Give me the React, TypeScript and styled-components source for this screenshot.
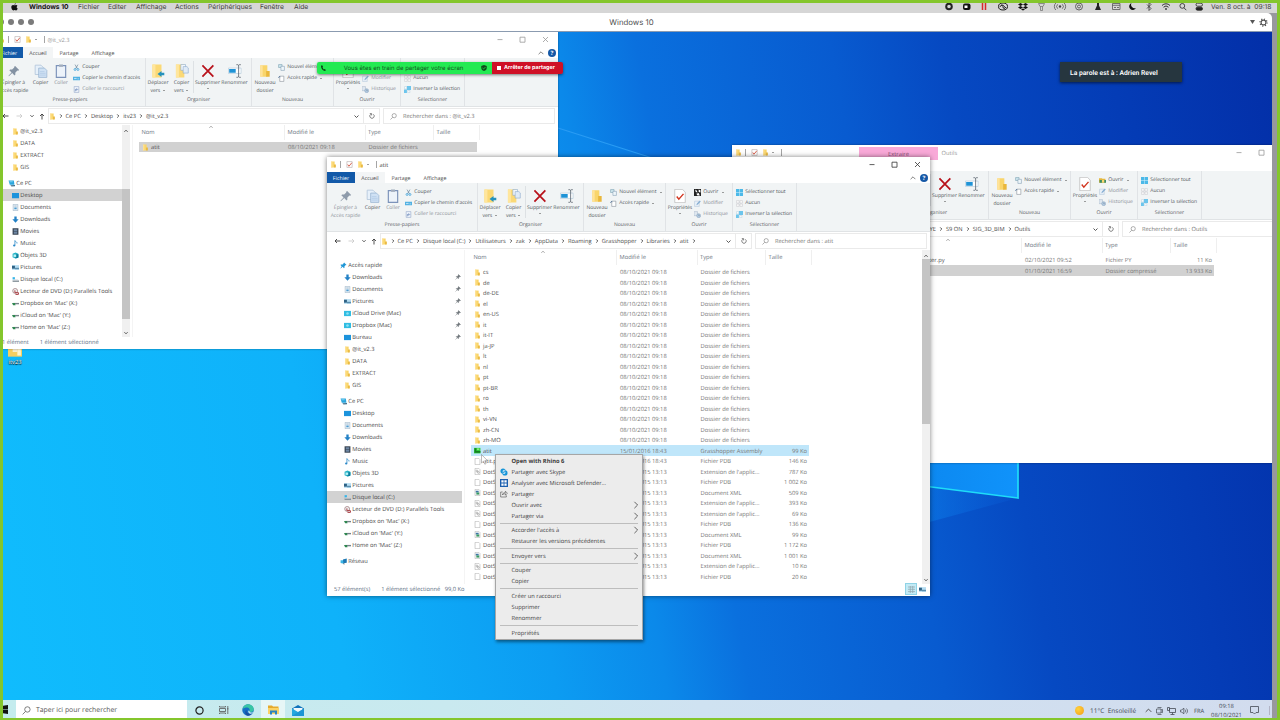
import React from 'react';
import styled, { createGlobalStyle } from 'styled-components';

const GlobalStyle = createGlobalStyle`
  * {
    box-sizing: border-box;
  }
  body {
    margin: 0;
    overflow: hidden;
    font-family: 'Open Sans', 'Noto Sans', sans-serif;
    font-size: 5.75px;
    color: #4a4a4a;
    text-rendering: geometricPrecision;
    white-space: nowrap;
  }
  svg {
    display: block;
    flex-shrink: 0;
  }
`;

/* ---------- icons ---------- */

type IconName =
  | 'folder' | 'zipfolder' | 'check' | 'pin' | 'copy' | 'paste' | 'scissors' | 'path' | 'shortcut'
  | 'move' | 'copyto' | 'delete' | 'rename' | 'newitem' | 'quick' | 'props' | 'open' | 'rhino' | 'edit'
  | 'history' | 'selall' | 'selnone' | 'selinv' | 'pc' | 'desktop' | 'doc' | 'down' | 'movies' | 'music'
  | 'cube' | 'pictures' | 'drive' | 'dvd' | 'netdrive' | 'cloud' | 'star' | 'network' | 'file' | 'dll'
  | 'xml' | 'gha' | 'search' | 'skype' | 'defender' | 'share' | 'refresh' | 'smallpin';

const shapes: Record<IconName, React.ReactNode> = {
  folder: (
    <>
      <path d="M2 1h6v10H2z" fill="#f9d56b" />
      <path d="M7 6h3v5H7z" fill="#e9b73c" />
      <path d="M2 1h2v10H2z" fill="#ffe39a" />
    </>
  ),
  zipfolder: (
    <>
      <path d="M0 0h12v10H0z" fill="#f6cf62" />
      <path d="M4 0h4v6H4z" fill="#f7edd0" />
      <path d="M8 1h3v8H8z" fill="#fff5d0" />
    </>
  ),
  check: (
    <>
      <path d="M1.5 1h9v10h-9z" fill="#fff" stroke="#b4a8a8" strokeWidth="1" />
      <path d="M3 6l2 3 5-6" fill="none" stroke="#d4503c" strokeWidth="1.5" />
    </>
  ),
  pin: (
    <path
      d="M7 1.8l3.4 3.4-.8.6-.7-.2-1.8 1.8.1 1.7-.8.7-1.9-2L1.6 10.4l-.3-.3 2.6-2.8L2 5.4l.7-.7 1.7.1 1.8-1.8-.1-.6z"
      fill="#8492a3"
    />
  ),
  copy: (
    <>
      <path d="M1 1h5l2 2v6H1z" fill="#e6f0fa" stroke="#a9bfd6" strokeWidth=".6" />
      <path d="M4 3.5h5l2 2V11.5H4z" fill="#cfe1f4" stroke="#94b0cf" strokeWidth=".6" />
      <path d="M5 6.5h4M5 8h5M5 9.5h5" stroke="#a8c5e4" strokeWidth=".5" />
    </>
  ),
  paste: (
    <>
      <path d="M2 1.4h8v10H2z" fill="#edf3fb" stroke="#7089b4" strokeWidth="1" />
      <path d="M4.3.4h3.4v2H4.3z" fill="#9aa6b8" />
    </>
  ),
  scissors: (
    <>
      <path d="M3.5 1l4 7M8.5 1l-4 7" stroke="#57748c" strokeWidth="1" />
      <circle cx="3.5" cy="9.4" r="1.7" fill="none" stroke="#2d9bd8" strokeWidth="1.2" />
      <circle cx="8.5" cy="9.4" r="1.7" fill="none" stroke="#2d9bd8" strokeWidth="1.2" />
    </>
  ),
  path: (
    <>
      <path d="M0 3h12v6H0z" fill="#4fb0e2" />
      <path d="M2 5l1 2 1-2 1 2 1-2M7.5 6.6h3" stroke="#fff" strokeWidth=".8" fill="none" />
    </>
  ),
  shortcut: (
    <>
      <path d="M2 1h8v10H2z" fill="#eef3fa" stroke="#8aa0c4" strokeWidth=".9" />
      <path d="M4 9V6h3M6 4l2 2-2 2" fill="none" stroke="#4d6fa8" strokeWidth="1" />
    </>
  ),
  move: (
    <>
      <path d="M1.2.5H9v11H1.2z" fill="#fbd976" />
      <path d="M1.2.5h2.6v11H1.2z" fill="#ffe69d" />
      <path d="M11.4 7.6v2H9v1.6L5.6 8.6 9 6v1.6z" fill="#2592bd" />
    </>
  ),
  copyto: (
    <>
      <path d="M.8.5H8v11H.8z" fill="#fbd976" />
      <path d="M.8.5h2.6v11H.8z" fill="#ffe69d" />
      <path d="M5 .4h4v5H5z" fill="#f2f7fc" stroke="#8aa8cc" strokeWidth=".5" />
      <path d="M7 2.2h3.2l1.2 1.2v4.4H7z" fill="#dfebf8" stroke="#8aa8cc" strokeWidth=".5" />
    </>
  ),
  delete: <path d="M1.2 1.2l9.4 9.6M10.6 1.2L1.2 10.8" stroke="#b8121b" strokeWidth="1.5" />,
  rename: (
    <>
      <path d="M.4 3.5h10.8v4.6H.4z" fill="#fff" stroke="#a9c3d8" strokeWidth=".5" />
      <path d="M1 4.2h5.6v3.2H1z" fill="#1f93d6" />
      <path d="M7.2.6h1.3l.6.5.6-.5H11M9.1 1v10M7.2 11.4h1.3l.6-.5.6.5H11" fill="none" stroke="#5c6670" strokeWidth=".7" />
    </>
  ),
  newitem: (
    <>
      <path d="M1 1h6v5H1z" fill="#cfe6ee" stroke="#6e98a8" strokeWidth=".9" />
      <path d="M5 4h6v7H5z" fill="#eef6fa" stroke="#7b98ae" strokeWidth=".9" />
    </>
  ),
  quick: (
    <>
      <path d="M3 2h7v9H3z" fill="#fff" stroke="#858d96" strokeWidth="1" />
      <path d="M0 5l3-3v2" fill="none" stroke="#4c6f96" strokeWidth="1.2" />
    </>
  ),
  props: (
    <>
      <path d="M1.5.3h6.6l2.4 2.4v9H1.5z" fill="#fff" stroke="#b6b6b6" strokeWidth=".6" />
      <path d="M3.2 6.4l1.8 2.3 4-4.5" fill="none" stroke="#d1351f" strokeWidth="1.2" />
    </>
  ),
  open: (
    <>
      <path d="M0 2h5l1 1h5v7H0z" fill="#e4b83e" />
      <path d="M1 5h11v5H1z" fill="#3d8c66" />
      <path d="M5 5h4v5H5z" fill="#f8d770" />
    </>
  ),
  rhino: (
    <>
      <path d="M0 0h12v12H0z" fill="#222" />
      <path d="M2 1l3 2 1 3-3-1zM8 1l3 1v4L8 5zM4 8l4-1 2 4H6z" fill="#fff" />
    </>
  ),
  edit: (
    <>
      <path d="M1 2h8v9H1z" fill="#eaf1f8" stroke="#a6bdd4" strokeWidth=".8" />
      <path d="M4 9l1-3 5-5 1.6 1.6-5 5z" fill="#86aed2" />
    </>
  ),
  history: (
    <>
      <path d="M0 1h6v7H0z" fill="#dfe8f0" stroke="#9fb1c6" strokeWidth=".8" />
      <circle cx="8" cy="8" r="3.4" fill="#b4cce2" stroke="#8099b8" strokeWidth=".8" />
      <path d="M8 6v2h2" fill="none" stroke="#64748a" strokeWidth=".7" />
    </>
  ),
  selall: (
    <>
      <path d="M0 0h12v12H0z" fill="#4cb9e8" />
      <path d="M6 0v12M0 6h12" stroke="#d7f1fc" strokeWidth=".9" />
    </>
  ),
  selnone: (
    <path d="M1 1h4.4v4.4H1zM6.8 1H11v4.4H6.8zM1 6.8h4.4V11H1zM6.8 6.8H11V11H6.8z" fill="#fafafa" stroke="#b9b9c0" strokeWidth=".7" />
  ),
  selinv: (
    <>
      <path d="M5 0h7v7H5zM0 6h5v6H0z" fill="#6cc5ec" />
      <path d="M1 1h3.6v4H1zM6.5 7.5H10v4H6.5z" fill="#fff" stroke="#8dbad4" strokeWidth=".6" />
    </>
  ),
  pc: (
    <>
      <path d="M1 1h9l1 7H3z" fill="#2aa5dc" />
      <path d="M4 9l8-.5v2L6 11z" fill="#3f6f8c" />
      <path d="M2 2h6v2H3z" fill="#79d2f4" />
    </>
  ),
  desktop: <path d="M0 1.5h12v9H0z" fill="#1c93dc" />,
  doc: (
    <>
      <path d="M2 .6h8v10.8H2z" fill="#e8f1f8" stroke="#90a9bd" strokeWidth=".9" />
      <path d="M4 6h4v3H4z" fill="#4f9cd0" />
      <path d="M4 3.5h4" stroke="#7f9cb4" />
    </>
  ),
  down: <path d="M4 1h4v4.5h3.4L6 11.4.6 5.5H4z" fill="#2381c6" />,
  movies: (
    <>
      <path d="M1 .5h10v11H1z" fill="#35414f" />
      <path d="M3 2h6v3.4H3zM3 6.6h6V10H3z" fill="#6d86a4" />
    </>
  ),
  music: (
    <>
      <path d="M5 1v8M5 1c1 2.4 4 2 3.6 5" stroke="#2787c8" strokeWidth="1.3" fill="none" />
      <ellipse cx="3.8" cy="9.4" rx="2" ry="1.6" fill="#2787c8" />
    </>
  ),
  cube: (
    <>
      <path d="M1 3l5-2 5 2v6l-5 2-5-2z" fill="#26b3c7" />
      <path d="M6 4h5v6L6 11z" fill="#0b7f9e" />
      <path d="M2.6 4.4h4.6v4H2.6z" fill="#b9f3f6" />
    </>
  ),
  pictures: (
    <>
      <path d="M0 2h12v8H0z" fill="#b4dcf2" />
      <path d="M0 3h5v5H0z" fill="#2f6284" />
      <path d="M5 6.500h7V9H5z" fill="#5b8fb0" />
    </>
  ),
  drive: (
    <>
      <path d="M1 7.600h11v2.400H1z" fill="#7a8790" />
      <path d="M1 2h4v4H1z" fill="#36b4e8" />
      <path d="M1 7.600h11l-2-1.400H3z" fill="#c9d2d8" />
    </>
  ),
  dvd: (
    <>
      <circle cx="5.4" cy="5" r="4.2" fill="#f1f1f1" stroke="#8d6468" strokeWidth="1.1" />
      <path d="M5 4v4h6v3H6" fill="none" stroke="#a5343a" strokeWidth="1.6" />
    </>
  ),
  netdrive: (
    <>
      <path d="M2 5h10v2.400H2z" fill="#76828a" />
      <path d="M0 5h5l1 4.200H2z" fill="#2f8750" />
    </>
  ),
  cloud: (
    <>
      <path d="M0 1.5h12v9H0z" fill="#31bde2" />
      <circle cx="6" cy="6" r="2.2" fill="#8fe0f2" />
    </>
  ),
  star: <path d="M7 .8l4.2 4.2-2 .6-1.6 2 .1 2.1-.9.8-2.3-2.4L1.2 11l-.4-.3 2-3.3L.8 5l.8-.8 3 .1 1.6-2z" fill="#2197d6" />,
  network: (
    <>
      <path d="M1 4h6v6l-6-1.4z" fill="#3bb5e6" />
      <path d="M5 2.4L11.6 1v7L6 9z" fill="#1d78b4" />
      <path d="M5 9l3 1-1 1.6z" fill="#555" />
    </>
  ),
  file: <path d="M1.8.6h6.4l2 2v8.8H1.8z" fill="#fff" stroke="#a3a3a3" strokeWidth=".9" />,
  dll: (
    <>
      <path d="M1.8.6h6.4l2 2v8.8H1.8z" fill="#fff" stroke="#a3a3a3" strokeWidth=".9" />
      <circle cx="5" cy="5" r="1.5" fill="none" stroke="#858585" strokeWidth=".9" />
      <circle cx="7.4" cy="7.6" r="1.5" fill="none" stroke="#858585" strokeWidth=".9" />
    </>
  ),
  xml: (
    <>
      <path d="M1.8.6h6.4l2 2v8.8H1.8z" fill="#fff" stroke="#a3a3a3" strokeWidth=".9" />
      <path d="M3 3h5v3H3z" fill="#3d75a5" />
      <path d="M4 6h5v3.6H4z" fill="#3a9a62" />
    </>
  ),
  gha: (
    <>
      <path d="M0 1.5h11v9.4H0z" fill="#2fcf3d" />
      <path d="M1 2h3v5h7v3H1z" fill="#147f23" />
      <path d="M5 2.5h4v2.4H5z" fill="#9af08e" />
    </>
  ),
  search: (
    <>
      <circle cx="7.2" cy="4.6" r="3.6" fill="none" stroke="currentColor" strokeWidth="1" />
      <path d="M4.6 7.4L.8 11.2" stroke="currentColor" strokeWidth="1" />
    </>
  ),
  skype: (
    <>
      <circle cx="4.6" cy="4.6" r="3.9" fill="#1594d8" />
      <circle cx="7.4" cy="7.4" r="3.9" fill="#1594d8" />
      <path d="M8 4.2C7 3.2 4.2 3.3 4.3 4.8c.1 1.4 3.6.9 3.6 2.4 0 1.4-2.800 1.500-3.900.3" fill="none" stroke="#fff" strokeWidth="1.1" />
    </>
  ),
  defender: (
    <>
      <path d="M0 0h12v12H0z" fill="#1c5fae" />
      <path d="M2 2h3.4v3.4H2zM6.6 2H10v3.4H6.6zM2 6.6h3.4V10H2zM6.6 6.6H10V10H6.6z" fill="#fff" />
    </>
  ),
  share: (
    <path d="M4 3H1v7.5h8.5V8M3.5 7.5c.4-2.6 2-3.6 4.6-3.6V1.800l3 3-3 3V5.600c-2 0-3.400.4-4.600 1.900z" fill="none" stroke="#4a4a4a" strokeWidth=".9" />
  ),
  refresh: (
    <>
      <path d="M3.4 2.6A4.400 4.400 0 1 0 8.600 2.600" fill="none" stroke="#444" strokeWidth="1.300" />
      <path d="M1.600 1.200h3.600v3.600" fill="none" stroke="#444" strokeWidth="1.300" />
    </>
  ),
  smallpin: (
    <path d="M7 1l4 4-2 .6-2 2-.2 2L2.4 5.2l2-.2 2-2zM4 8l-3 3" fill="#6e7479" stroke="#6e7479" strokeWidth=".9" />
  ),
};

interface IconProps {
  name: IconName;
  size?: number;
}

function Icon({ name, size = 7 }: IconProps) {
  return (
    <svg width={size} height={size} viewBox="0 0 12 12">
      {shapes[name]}
    </svg>
  );
}

interface ChevronProps {
  dir: 'up' | 'down' | 'right';
  size?: number;
  color?: string;
}

const chevrons = { up: 'M1 7l4-4 4 4', down: 'M1 3l4 4 4-4', right: 'M3 1l4 4-4 4' };

function Chevron({ dir, size = 4, color = '#444' }: ChevronProps) {
  return (
    <svg width={size} height={size} viewBox="0 0 10 10">
      <path d={chevrons[dir]} fill="none" stroke={color} strokeWidth={9 / size} />
    </svg>
  );
}

/* ---------- screen ---------- */

const Screen = styled.div`
  position: relative;
  width: 1280px;
  height: 720px;
  overflow: hidden;
  display: flex;
  flex-direction: column;
  background: #98989d;
  border: solid #84c62c;
  border-width: 3px 3px 2px 3px;
`;

const MenuBar = styled.div`
  height: 10px;
  display: flex;
  align-items: center;
  justify-content: space-between;
  background: #d6d6d6;
  padding: 0 5px 3px 8px;
  font-family: Inter, sans-serif;
  font-size: 6.7px;
  color: #3c3c3c;
`;

const MenuItems = styled.div`
  display: grid;
  grid-template-columns: 18px 49px 30px 28px 39px 33px 52px 34px 20px;
  align-items: center;
`;

const MenuItem = styled.span<{ $bold?: boolean }>`
  font-weight: ${(p) => (p.$bold ? 700 : 400)};
  color: ${(p) => (p.$bold ? '#111' : 'inherit')};
`;

const TrayIcons = styled.div`
  display: flex;
  align-items: center;
`;

const MacClock = styled.span`
  width: 61px;
  font-size: 6.7px;
  margin-left: 8px;
`;

const VmWindow = styled.div`
  width: 1269px;
  flex: 1;
  display: flex;
  flex-direction: column;
  border-radius: 0 5px 0 0;
  overflow: hidden;
  background: #fff;
`;

const VmTitle = styled.div`
  height: 19px;
  display: grid;
  grid-template-columns: 100px 1fr 100px;
  align-items: center;
  border-bottom: 1px solid #8b9bb0;
  font-family: Inter, sans-serif;
  font-size: 7.8px;
  color: #505050;
`;

const TrafficLights = styled.div`
  display: flex;
  gap: 4px;
  margin-left: -5px;
`;

const Light = styled.span`
  width: 6px;
  height: 6px;
  border-radius: 50%;
  background: #7b7b7b;
`;

const VmName = styled.div`
  text-align: center;
  padding-right: 12px;
`;

const VmActions = styled.div`
  display: flex;
  justify-content: flex-end;
  align-items: center;
  gap: 4px;
  padding-right: 4px;
`;

const Desktop = styled.div`
  position: relative;
  flex: 1;
  overflow: hidden;
  background: linear-gradient(
    80deg,
    #10bcfd 0%,
    #0fb2fa 25%,
    #0c9cf2 40%,
    #0b89ea 48%,
    #0a70de 54%,
    #085bd0 68%,
    #0649c2 76%,
    #043cb6 88%,
    #032fa8 100%
  );
`;

const Wallpaper = styled.svg`
  position: absolute;
  inset: 0;
`;

const ShortcutItem = styled.div`
  position: absolute;
  left: 2px;
  top: 313px;
  width: 20px;
  display: flex;
  flex-direction: column;
  align-items: center;
  color: #fff;
  line-height: 7px;
  text-shadow: 0 1px 1px #000, 0 0 1px #000;
`;

/* ---------- explorer window ---------- */

const Frame = styled.section<{ $x: number; $y: number; $w: number; $h: number; $dim?: boolean }>`
  position: absolute;
  left: ${(p) => p.$x}px;
  top: ${(p) => p.$y}px;
  width: ${(p) => p.$w}px;
  height: ${(p) => p.$h}px;
  display: flex;
  flex-direction: column;
  background: #fff;
  box-shadow: 0 0 ${(p) => (p.$dim ? 2 : 5)}px rgba(0, 0, 0, ${(p) => (p.$dim ? 0.4 : 0.5)});
`;

const TitleBar = styled.header<{ $dim?: boolean }>`
  height: 15px;
  flex-shrink: 0;
  display: flex;
  align-items: center;
  padding-left: 3px;
  color: ${(p) => (p.$dim ? '#9a9a9a' : '#444')};
`;

const QuickAccess = styled.div`
  display: grid;
  grid-template-columns: 10px 6px 11px 8.5px 10.5px 3px;
  align-items: center;
  justify-items: start;
`;

const Bar = styled.i`
  width: 1px;
  height: 7px;
  background: #a5a5a5;
`;

const TitleText = styled.span`
  margin-left: 0.5px;
`;

const ContextTab = styled.span`
  width: 79px;
  height: 13px;
  margin: 2px 3px 0 75px;
  background: #f9a9d8;
  color: #8a4d75;
  display: flex;
  align-items: center;
  justify-content: center;
`;

const Controls = styled.div`
  margin-left: auto;
  padding-right: 9px;
`;

const Tabs = styled.nav`
  height: 11px;
  flex-shrink: 0;
  display: flex;
  font-size: 5.3px;
`;

const Tab = styled.span<{ $w: number; $kind?: 'file' | 'active' }>`
  width: ${(p) => p.$w}px;
  display: flex;
  align-items: center;
  justify-content: center;
  background: ${(p) => (p.$kind === 'file' ? '#1259a8' : p.$kind === 'active' ? '#f3f5f6' : 'transparent')};
  color: ${(p) => (p.$kind === 'file' ? '#fff' : 'inherit')};
`;

const TabTools = styled.div`
  margin-left: auto;
  display: flex;
  align-items: center;
  gap: 4px;
  padding-right: 2px;
`;

const Help = styled.span`
  width: 8px;
  height: 8px;
  border-radius: 50%;
  background: #1558a6;
  color: #fff;
  font-weight: 700;
  font-size: 6px;
  line-height: 8px;
  text-align: center;
`;

const RibbonBar = styled.div`
  height: 49px;
  flex-shrink: 0;
  display: flex;
  background: #f1f4f5;
  border-bottom: 1px solid #e0e3e5;
  font-size: 5.05px;
`;

const Group = styled.div<{ $w: number }>`
  width: ${(p) => p.$w}px;
  display: flex;
  flex-direction: column;
  border-right: 1px solid #e0e3e6;
`;

const GroupBody = styled.div<{ $indent?: number }>`
  height: 38px;
  padding-left: ${(p) => p.$indent ?? 0}px;
  display: flex;
`;

const GroupLabel = styled.div`
  text-align: center;
  line-height: 11px;
  color: #5c6166;
`;

const BigButton = styled.div<{ $w: number; $off?: boolean }>`
  width: ${(p) => p.$w}px;
  flex-shrink: 0;
  padding-top: 5.5px;
  display: flex;
  flex-direction: column;
  align-items: center;
  line-height: 7.5px;
  color: ${(p) => (p.$off ? '#8c9198' : '#50555a')};
  svg {
    margin-bottom: 2.5px;
    opacity: ${(p) => (p.$off ? 0.9 : 1)};
  }
`;

const Caret = styled.i`
  display: inline-block;
  border: 1.3px solid transparent;
  border-top: 1.6px solid #444;
  border-bottom: 0;
  margin: 0 1px;
  vertical-align: middle;
`;

const SmallList = styled.div`
  padding-top: 3.5px;
  flex-shrink: 0;
  display: flex;
  flex-direction: column;
`;

const SmallButton = styled.div<{ $off?: boolean }>`
  height: 11px;
  display: flex;
  align-items: center;
  gap: 2.3px;
  color: ${(p) => (p.$off ? '#8c9198' : '#50555a')};
`;

const Divider = styled.i`
  width: 1px;
  height: 32px;
  margin-top: 3px;
  background: #dde1e4;
`;

const AddressRow = styled.div`
  height: 17.5px;
  flex-shrink: 0;
  display: flex;
  align-items: center;
  padding: 1px 3px 0.5px 7px;
`;

const NavArrows = styled.div`
  width: 45.5px;
  display: grid;
  grid-template-columns: 14px 13.5px 9px 9px;
  align-items: center;
`;

const AddressBox = styled.div`
  flex: 1;
  height: 15.5px;
  min-width: 0;
  display: flex;
  align-items: center;
  border: 1px solid #eaeaea;
`;

const Crumbs = styled.div<{ $indent: number }>`
  display: flex;
  align-items: center;
  gap: 3px;
  margin-left: ${(p) => p.$indent}px;
  flex: 1;
`;

const Refresh = styled.div`
  width: 16px;
  height: 14px;
  margin-left: 4px;
  border-left: 1px solid #eaeaea;
  display: flex;
  align-items: center;
  justify-content: center;
`;

const SearchBox = styled.div`
  width: 172px;
  height: 15.5px;
  margin-left: 3px;
  padding-left: 6px;
  display: flex;
  align-items: center;
  gap: 6px;
  border: 1px solid #eaeaea;
  color: #777;
`;

const Body = styled.div`
  flex: 1;
  min-height: 0;
  display: flex;
`;

const NavPane = styled.aside<{ $top: number }>`
  width: 135px;
  flex-shrink: 0;
  display: flex;
  overflow: hidden;
  > div:first-child {
    flex: 1;
    padding-top: ${(p) => p.$top}px;
  }
`;

const NavItem = styled.div<{ $root?: boolean; $selected?: boolean; $gap?: boolean }>`
  height: 12px;
  margin-top: ${(p) => (p.$gap ? 4 : 0)}px;
  padding-left: ${(p) => (p.$root ? 12.5 : 16.5)}px;
  padding-right: 1px;
  display: flex;
  align-items: center;
  gap: 1.8px;
  background: ${(p) => (p.$selected ? '#d2d2d2' : 'transparent')};
  > svg:nth-of-type(2) {
    margin-left: auto;
  }
`;

const ScrollTrack = styled.div<{ $top: number; $thumb: number }>`
  width: 8px;
  flex-shrink: 0;
  display: flex;
  flex-direction: column;
  align-items: center;
  background: #f0f0f0;
  padding: 4px 0 2px;
  > i {
    width: 8px;
    height: ${(p) => p.$thumb}px;
    margin-top: ${(p) => p.$top}px;
    margin-bottom: auto;
    background: #c4c4c4;
  }
`;

const FileList = styled.main`
  flex: 1;
  margin-left: 2px;
  padding-left: 6px;
  border-left: 1px solid #f4f4f4;
  overflow: hidden;
`;

const ListHeader = styled.div`
  position: relative;
  width: 340.5px;
  height: 15px;
  margin-bottom: 2.3px;
  display: grid;
  grid-template-columns: 146px 80.5px 68.5px 45.5px;
  color: #6a7480;
  > span {
    display: flex;
    align-items: center;
    padding-left: 2.5px;
    border-right: 1px solid #efefef;
  }
  > svg {
    position: absolute;
    left: 70px;
    top: 0;
  }
`;

const Row = styled.div<{ $state?: 'active' | 'inactive' }>`
  width: 338px;
  height: 10.51px;
  display: grid;
  grid-template-columns: 146px 80.5px 68.5px 43px;
  align-items: center;
  color: #777;
  background: ${(p) => (p.$state === 'active' ? '#bfe6fa' : p.$state === 'inactive' ? '#d1d1d1' : 'transparent')};
`;

const NameCell = styled.span`
  display: flex;
  align-items: center;
  gap: 2.5px;
  padding-left: 2.5px;
  color: #505050;
`;

const Cell = styled.span<{ $right?: boolean }>`
  padding: 0 2px 0 3px;
  text-align: ${(p) => (p.$right ? 'right' : 'left')};
`;

const StatusBar = styled.footer`
  height: 12.5px;
  flex-shrink: 0;
  display: flex;
  align-items: center;
  gap: 11px;
  padding: 0 0 1.5px 7px;
  color: #5d6f84;
`;

const Views = styled.div`
  margin-left: auto;
  display: flex;
  align-items: center;
  gap: 1px;
  padding-right: 4px;
`;

const ViewButton = styled.span<{ $on?: boolean }>`
  width: ${(p) => (p.$on ? 12 : 8)}px;
  height: 12px;
  display: flex;
  align-items: center;
  justify-content: center;
  background: ${(p) => (p.$on ? '#c3eaf5' : 'transparent')};
  border: ${(p) => (p.$on ? '1px solid #8fd3e6' : '0')};
`;

interface NavEntry {
  icon: IconName;
  label: string;
  root?: boolean;
  pinned?: boolean;
  gap?: boolean;
}

interface FileEntry {
  icon?: IconName;
  name: string;
  date: string;
  type: string;
  size?: string;
}

const folderShortcuts: NavEntry[] = ['@it_v2.3', 'DATA', 'EXTRACT', 'GIS'].map((label) => ({ icon: 'folder', label }));

const computer: NavEntry[] = [
  { icon: 'pc', label: 'Ce PC', root: true, gap: true },
  { icon: 'desktop', label: 'Desktop' },
  { icon: 'doc', label: 'Documents' },
  { icon: 'down', label: 'Downloads' },
  { icon: 'movies', label: 'Movies' },
  { icon: 'music', label: 'Music' },
  { icon: 'cube', label: 'Objets 3D' },
  { icon: 'pictures', label: 'Pictures' },
  { icon: 'drive', label: 'Disque local (C:)' },
  { icon: 'dvd', label: 'Lecteur de DVD (D:) Parallels Tools' },
  { icon: 'netdrive', label: "Dropbox on 'Mac' (X:)" },
  { icon: 'netdrive', label: "iCloud on 'Mac' (Y:)" },
  { icon: 'netdrive', label: "Home on 'Mac' (Z:)" },
];

const fullNav: NavEntry[] = [
  { icon: 'star', label: 'Accès rapide', root: true },
  { icon: 'down', label: 'Downloads', pinned: true },
  { icon: 'doc', label: 'Documents', pinned: true },
  { icon: 'pictures', label: 'Pictures', pinned: true },
  { icon: 'cloud', label: 'iCloud Drive (Mac)', pinned: true },
  { icon: 'cloud', label: 'Dropbox (Mac)', pinned: true },
  { icon: 'desktop', label: 'Bureau', pinned: true },
  ...folderShortcuts,
  ...computer,
  { icon: 'network', label: 'Réseau', root: true, gap: true },
];

const cultures = [
  'cs', 'de', 'de-DE', 'el', 'en-US', 'it', 'it-IT', 'ja-JP', 'lt', 'nl', 'pt', 'pt-BR', 'ro', 'th', 'vi-VN', 'zh-CN', 'zh-MO',
];

const dll = "Extension de l'applic...";
const spatial: [IconName, string, string][] = [
  ['dll', dll, '787 Ko'],
  ['file', 'Fichier PDB', '1 002 Ko'],
  ['xml', 'Document XML', '509 Ko'],
  ['dll', dll, '393 Ko'],
  ['dll', dll, '69 Ko'],
  ['file', 'Fichier PDB', '136 Ko'],
  ['xml', 'Document XML', '99 Ko'],
  ['file', 'Fichier PDB', '1 172 Ko'],
  ['xml', 'Document XML', '1 001 Ko'],
  ['dll', dll, '10 Ko'],
  ['file', 'Fichier PDB', '20 Ko'],
];

const atitFiles: FileEntry[] = [
  ...cultures.map((name): FileEntry => ({ icon: 'folder', name, date: '08/10/2021 09:18', type: 'Dossier de fichiers' })),
  { icon: 'gha', name: 'atit', date: '15/01/2016 18:43', type: 'Grasshopper Assembly', size: '99 Ko' },
  { icon: 'file', name: 'atit.pdb', date: '15/01/2016 18:43', type: 'Fichier PDB', size: '146 Ko' },
  ...spatial.map(([icon, type, size]): FileEntry => ({ icon, name: 'DotSpatial', date: '27/03/2015 13:13', type, size })),
];

interface RibbonProps {
  pinOff?: boolean;
  openIcon: IconName;
}

function Ribbon({ pinOff, openIcon }: RibbonProps) {
  return (
    <RibbonBar>
      <Group $w={151}>
        <GroupBody>
          <BigButton $w={37} $off={pinOff}>
            <Icon name="pin" size={14} />
            <span>Épingler à</span>
            <span>Accès rapide</span>
          </BigButton>
          <BigButton $w={17}>
            <Icon name="copy" size={14} />
            <span>Copier</span>
          </BigButton>
          <BigButton $w={24} $off>
            <Icon name="paste" size={14} />
            <span>Coller</span>
          </BigButton>
          <SmallList>
            <SmallButton><Icon name="scissors" />Couper</SmallButton>
            <SmallButton><Icon name="path" />Copier le chemin d'accès</SmallButton>
            <SmallButton $off><Icon name="shortcut" />Coller le raccourci</SmallButton>
          </SmallList>
        </GroupBody>
        <GroupLabel>Presse-papiers</GroupLabel>
      </Group>
      <Group $w={106}>
        <GroupBody>
          <BigButton $w={24}>
            <Icon name="move" size={14} />
            <span>Déplacer</span>
            <span>vers <Caret /></span>
          </BigButton>
          <BigButton $w={23}>
            <Icon name="copyto" size={14} />
            <span>Copier</span>
            <span>vers <Caret /></span>
          </BigButton>
          <Divider />
          <BigButton $w={27}>
            <Icon name="delete" size={14} />
            <span>Supprimer</span>
            <Caret />
          </BigButton>
          <BigButton $w={27}>
            <Icon name="rename" size={14} />
            <span>Renommer</span>
          </BigButton>
        </GroupBody>
        <GroupLabel>Organiser</GroupLabel>
      </Group>
      <Group $w={82}>
        <GroupBody>
          <BigButton $w={26}>
            <Icon name="folder" size={14} />
            <span>Nouveau</span>
            <span>dossier</span>
          </BigButton>
          <SmallList>
            <SmallButton><Icon name="newitem" />Nouvel élément <Caret /></SmallButton>
            <SmallButton><Icon name="quick" />Accès rapide <Caret /></SmallButton>
          </SmallList>
        </GroupBody>
        <GroupLabel>Nouveau</GroupLabel>
      </Group>
      <Group $w={67}>
        <GroupBody>
          <BigButton $w={28}>
            <Icon name="props" size={14} />
            <span>Propriétés</span>
            <Caret />
          </BigButton>
          <SmallList>
            <SmallButton><Icon name={openIcon} />Ouvrir <Caret /></SmallButton>
            <SmallButton $off><Icon name="edit" />Modifier</SmallButton>
            <SmallButton $off><Icon name="history" />Historique</SmallButton>
          </SmallList>
        </GroupBody>
        <GroupLabel>Ouvrir</GroupLabel>
      </Group>
      <Group $w={64}>
        <GroupBody $indent={3}>
          <SmallList>
            <SmallButton><Icon name="selall" />Sélectionner tout</SmallButton>
            <SmallButton><Icon name="selnone" />Aucun</SmallButton>
            <SmallButton><Icon name="selinv" />Inverser la sélection</SmallButton>
          </SmallList>
        </GroupBody>
        <GroupLabel>Sélectionner</GroupLabel>
      </Group>
    </RibbonBar>
  );
}

interface ExplorerProps {
  x: number;
  y: number;
  width: number;
  height: number;
  title: string;
  crumbs: string[];
  nav: NavEntry[];
  navTop: number;
  navSelected?: string;
  navScroll?: boolean;
  files: FileEntry[];
  fileSelected: string;
  status: string[];
  active?: boolean;
  contextTab?: string;
  openIcon?: IconName;
  crumbIndent?: number;
}

function Explorer(props: ExplorerProps) {
  const { active, crumbs, nav, files, contextTab } = props;
  return (
    <Frame $x={props.x} $y={props.y} $w={props.width} $h={props.height} $dim={!active}>
      <TitleBar $dim={!active}>
        <QuickAccess>
          <Icon name="folder" />
          <Bar />
          <Icon name="check" />
          <Icon name="folder" />
          <Caret />
          <Bar />
        </QuickAccess>
        {contextTab && <ContextTab>{contextTab}</ContextTab>}
        <TitleText>{props.title}</TitleText>
        <Controls>
          <svg width="54" height="7" viewBox="0 0 54 7" fill="none" stroke={active ? '#333' : '#999'} strokeWidth=".8">
            <path d="M2.5 3.6h5M25 1.2h5v5h-5zM48 1l5 5M53 1l-5 5" />
          </svg>
        </Controls>
      </TitleBar>
      <Tabs>
        <Tab $w={28} $kind="file">Fichier</Tab>
        <Tab $w={30} $kind="active">Accueil</Tab>
        <Tab $w={32}>Partage</Tab>
        <Tab $w={36}>Affichage</Tab>
        <TabTools>
          <Chevron dir="up" size={6} color="#777" />
          <Help>?</Help>
        </TabTools>
      </Tabs>
      <Ribbon pinOff={active} openIcon={props.openIcon ?? 'open'} />
      <AddressRow>
        <NavArrows>
          <svg width="7" height="6" viewBox="0 0 14 12" fill="none" stroke="#333" strokeWidth="1.7">
            <path d="M13 6H2M6 2L2 6l4 4" />
          </svg>
          <svg width="7" height="6" viewBox="0 0 14 12" fill="none" stroke="#c4c4c4" strokeWidth="1.5">
            <path d="M1 6h11M8 2l4 4-4 4" />
          </svg>
          <Chevron dir="down" size={4} />
          <svg width="6" height="7" viewBox="0 0 12 14" fill="none" stroke="#333" strokeWidth="1.7">
            <path d="M6 13V2M2 6l4-4 4 4" />
          </svg>
        </NavArrows>
        <AddressBox>
          <Crumbs $indent={props.crumbIndent ?? 0}>
            <Icon name="folder" />
            {crumbs.map((crumb) => (
              <React.Fragment key={crumb}>
                <Chevron dir="right" />
                <span>{crumb}</span>
              </React.Fragment>
            ))}
            {active && <Chevron dir="right" />}
          </Crumbs>
          <Chevron dir="down" size={5} />
          <Refresh><Icon name="refresh" size={6} /></Refresh>
        </AddressBox>
        <SearchBox>
          <Icon name="search" />
          Rechercher dans : {props.title}
        </SearchBox>
      </AddressRow>
      <Body>
        <NavPane $top={props.navTop}>
          <div>
            {nav.map((item, i) => (
              <NavItem key={i} $root={item.root} $gap={item.gap} $selected={item.label === props.navSelected}>
                <Icon name={item.icon} />
                {item.label}
                {item.pinned && <Icon name="smallpin" size={6} />}
              </NavItem>
            ))}
          </div>
          {props.navScroll && (
            <ScrollTrack $top={56} $thumb={130}>
              <Chevron dir="up" />
              <i />
              <Chevron dir="down" />
            </ScrollTrack>
          )}
        </NavPane>
        <FileList>
          <ListHeader>
            <span>Nom</span>
            <span>Modifié le</span>
            <span>Type</span>
            <span>Taille</span>
            <Chevron dir="up" color="#999" />
          </ListHeader>
          {files.map((file, i) => (
            <Row key={i} $state={file.name === props.fileSelected ? (active ? 'active' : 'inactive') : undefined}>
              <NameCell>
                {file.icon && <Icon name={file.icon} />}
                {file.name}
              </NameCell>
              <Cell>{file.date}</Cell>
              <Cell>{file.type}</Cell>
              <Cell $right>{file.size}</Cell>
            </Row>
          ))}
        </FileList>
        {active && (
          <ScrollTrack $top={1} $thumb={165}>
            <Chevron dir="up" />
            <i />
            <Chevron dir="down" />
          </ScrollTrack>
        )}
      </Body>
      <StatusBar>
        {props.status.map((text) => (
          <span key={text}>{text}</span>
        ))}
        {active && (
          <Views>
            <ViewButton $on>
              <svg width="7" height="7" viewBox="0 0 7 7" stroke="#8fa5ae" strokeWidth=".7">
                <path d="M0 1h7M0 3.3h7M0 5.6h7M2.3 0v7M4.7 0v7" />
              </svg>
            </ViewButton>
            <ViewButton><Icon name="pictures" size={7} /></ViewButton>
          </Views>
        )}
      </StatusBar>
    </Frame>
  );
}

/* ---------- context menu ---------- */

const Menu = styled.div`
  position: absolute;
  left: 492px;
  top: 422px;
  width: 148px;
  height: 186px;
  padding-top: 0.4px;
  background: #ececec;
  border: 1px solid #a6a6a6;
  box-shadow: 1px 2px 3px rgba(0, 0, 0, 0.45);
  color: #3c3c3c;
`;

const MenuRow = styled.div<{ $bold?: boolean }>`
  height: 11px;
  display: grid;
  grid-template-columns: 12px 1fr 10px;
  align-items: center;
  padding-left: 3.5px;
  font-weight: ${(p) => (p.$bold ? 700 : 400)};
  > span {
    grid-column: 2;
  }
`;

const MenuLine = styled.hr`
  margin: 1.2px 4px 1.35px;
  border: 0;
  border-top: 1px solid #bdbdbd;
`;

interface MenuEntry {
  label: string;
  icon?: IconName;
  sub?: boolean;
  bold?: boolean;
}

const menuGroups: MenuEntry[][] = [
  [
    { label: 'Open with Rhino 6', bold: true },
    { label: 'Partager avec Skype', icon: 'skype' },
    { label: 'Analyser avec Microsoft Defender...', icon: 'defender' },
    { label: 'Partager', icon: 'share' },
    { label: 'Ouvrir avec', sub: true },
    { label: 'Partager via', sub: true },
  ],
  [{ label: "Accorder l'accès à", sub: true }, { label: 'Restaurer les versions précédentes' }],
  [{ label: 'Envoyer vers', sub: true }],
  [{ label: 'Couper' }, { label: 'Copier' }],
  [{ label: 'Créer un raccourci' }, { label: 'Supprimer' }, { label: 'Renommer' }],
  [{ label: 'Propriétés' }],
];

function ContextMenu() {
  return (
    <Menu>
      {menuGroups.map((group, i) => (
        <React.Fragment key={i}>
          {i > 0 && <MenuLine />}
          {group.map((entry) => (
            <MenuRow key={entry.label} $bold={entry.bold}>
              {entry.icon && <Icon name={entry.icon} size={8} />}
              <span>{entry.label}</span>
              {entry.sub && <Chevron dir="right" size={8} color="#555" />}
            </MenuRow>
          ))}
        </React.Fragment>
      ))}
    </Menu>
  );
}

const Cursor = styled.svg`
  position: absolute;
  left: 478px;
  top: 422px;
`;

/* ---------- overlays ---------- */

const ShareBanner = styled.div`
  position: absolute;
  left: 314px;
  top: 59px;
  width: 246px;
  height: 12px;
  display: grid;
  grid-template-columns: 175px 71px;
  border-radius: 2px;
  overflow: hidden;
  box-shadow: 0 1px 3px rgba(0, 0, 0, 0.5);
  font-family: Inter, sans-serif;
  font-size: 6px;
`;

const Sharing = styled.div`
  display: flex;
  align-items: center;
  justify-content: space-between;
  padding: 0 5px 0 4px;
  background: #23ea52;
  color: #14541f;
`;

const StopSharing = styled.div`
  display: flex;
  align-items: center;
  justify-content: center;
  gap: 3px;
  padding-right: 3px;
  background: #cf1026;
  color: #fff;
  font-weight: 700;
  font-size: 5.4px;
  i {
    width: 4px;
    height: 4px;
    background: #fff;
  }
`;

const Toast = styled.div`
  position: absolute;
  left: 1057px;
  top: 59px;
  width: 122px;
  height: 20px;
  padding: 1px 0 0 10px;
  display: flex;
  align-items: center;
  background: #26363f;
  color: #fff;
  font-family: Roboto, sans-serif;
  font-weight: 600;
  font-size: 6.75px;
  box-shadow: 0 1px 3px rgba(0, 0, 0, 0.6);
`;

/* ---------- taskbar ---------- */

const TaskBar = styled.div`
  height: 18px;
  display: flex;
  align-items: center;
  background: linear-gradient(90deg, #c4ecee 0%, #c9e9ef 35%, #cfe2f1 55%, #d2dcee 100%);
  font-size: 6.7px;
`;

const StartButton = styled.div`
  width: 13px;
`;

const TaskSearch = styled.div`
  width: 171px;
  height: 18px;
  display: flex;
  align-items: center;
  gap: 5px;
  padding: 2px 0 0 6px;
  background: #fff;
  color: #555;
  font-size: 6.9px;
`;

const TaskButton = styled.div<{ $on?: boolean }>`
  width: 24.6px;
  height: 18px;
  padding-top: 2px;
  display: flex;
  align-items: center;
  justify-content: center;
  background: ${(p) => (p.$on ? '#e6f6f6' : 'transparent')};
`;

const Tray = styled.div`
  margin-left: auto;
  padding-top: 3px;
  display: flex;
  align-items: center;
  color: #454b55;
`;

const Sun = styled.span`
  width: 9px;
  height: 9px;
  margin-right: 6px;
  border-radius: 50%;
  background: radial-gradient(circle at 35% 35%, #ffd23c, #f39c1c);
`;

const Weather = styled.span`
  width: 55px;
  font-size: 6.5px;
`;

const TrayGlyphs = styled.div`
  width: 49px;
  display: flex;
  align-items: center;
  justify-content: space-between;
  padding-right: 6px;
`;

const Lang = styled.span`
  width: 16px;
  font-size: 5.8px;
`;

const Clock = styled.div`
  width: 33px;
  text-align: center;
  font-size: 5.8px;
  line-height: 9px;
  margin-right: 7px;
`;

function App() {
  return (
    <>
      <GlobalStyle />
      <Screen>
        <MenuBar>
          <MenuItems>
            <svg width="7" height="8" viewBox="0 0 14 16" fill="#111">
              <path d="M7 4.6C8 4.6 9 3.9 10.3 4c1 0 2 .5 2.6 1.4-2.3 1.3-2 4.7.5 5.7-.6 1.7-1.9 3.7-3.2 3.7-1.1 0-1.5-.6-2.8-.6s-1.7.6-2.8.6C3 14.9.6 11.5.6 8.5c0-2.8 1.8-4.4 3.6-4.4 1.1 0 2 .6 2.8.6zM9.7.5c.1 1.5-1.2 3-2.7 3C6.8 2 8.3.6 9.7.5z" />
            </svg>
            <MenuItem $bold>Windows 10</MenuItem>
            {['Fichier', 'Editer', 'Affichage', 'Actions', 'Périphériques', 'Fenêtre', 'Aide'].map((label) => (
              <MenuItem key={label}>{label}</MenuItem>
            ))}
          </MenuItems>
          <TrayIcons>
            <svg width="260" height="9" viewBox="0 0 260 9" fill="none" stroke="#222">
              <circle cx="6" cy="4.5" r="2.8" strokeWidth="2" />
              <rect x="20" y="1.5" width="7.5" height="6.5" rx="2" fill="#111" stroke="none" />
              <path d="M21.5 3.5h3v2.5h-3z" fill="#fff" stroke="none" />
              <path d="M39.5 1v7M42.5 1v7" stroke="#d8272c" strokeWidth="1.5" />
              <ellipse cx="60" cy="4.5" rx="4.5" ry="3.5" strokeWidth="1" />
              <path d="M57 5c1-3 3-2 3 0s2 2 3 0M58 3.5c2-1 3 0 4 2" strokeWidth="1" />
              <path d="M75 2.5L77.5 1 80 2.5 77.5 4zM80 2.5L82.5 1 85 2.5 82.5 4zM75 5.5L77.5 4 80 5.5 77.5 7zM80 5.5L82.5 4 85 5.5 82.5 7zM78 7.5l2-1 2 1-2 1z" fill="#111" stroke="none" />
              <path d="M95.5 1.5h6l-1.5 3h-3zM97.5 4.5v4h2v-4" stroke="#777" strokeWidth=".8" />
              <circle cx="117" cy="4.5" r="1.2" fill="#444" stroke="none" />
              <path d="M114.7 2.3a3 3 0 0 0 0 4.4M119.3 2.3a3 3 0 0 1 0 4.4M112.8 1a5 5 0 0 0 0 7M121.2 1a5 5 0 0 1 0 7" stroke="#555" strokeWidth=".8" />
              <circle cx="136" cy="4.5" r="3.5" stroke="#555" strokeWidth=".9" />
              <circle cx="136" cy="4.5" r="1.5" stroke="#555" strokeWidth=".9" />
              <path d="M154 1h2v2.5l2 4.5h-6l2-4.5z" fill="#222" stroke="none" />
              <path d="M169.5 1.5h7.5v6h-7.5zM169.5 3.3h7.5M171 5.5h2M174 5.5h2" stroke="#555" strokeWidth=".8" />
              <path d="M188.5 1a3.6 3.6 0 1 0 4.5 5 3.6 3.6 0 0 1-4.5-5z" fill="#111" stroke="none" />
              <path d="M204 2.5l4 4-2 2v-8l2 2-4 4" stroke="#333" strokeWidth=".8" />
              <path d="M219 3.5a5.5 5.5 0 0 1 8 0M220.5 5.2a3.5 3.5 0 0 1 5 0" stroke="#333" strokeWidth="1" />
              <circle cx="223" cy="7" r=".9" fill="#333" stroke="none" />
              <circle cx="239.3" cy="3.9" r="2.4" strokeWidth=".8" />
              <path d="M241 5.8l2.3 2.4" strokeWidth=".8" />
              <rect x="253" y="1.2" width="6.5" height="3" rx="1.5" strokeWidth=".8" />
              <rect x="253" y="5.2" width="6.5" height="3" rx="1.5" fill="#222" strokeWidth=".8" />
            </svg>
            <MacClock>Ven. 8 oct. à&nbsp; 09:18</MacClock>
          </TrayIcons>
        </MenuBar>
        <VmWindow>
          <VmTitle>
            <TrafficLights>
              <Light />
              <Light />
              <Light />
              <Light />
            </TrafficLights>
            <VmName>Windows 10</VmName>
            <VmActions>
              <svg width="5" height="4" viewBox="0 0 5 4"><path d="M0 0h5L2.5 4z" fill="#555" /></svg>
              <svg width="9" height="9" viewBox="0 0 18 18" fill="none" stroke="#555">
                <circle cx="9" cy="9" r="4.8" strokeWidth="2.2" />
                <circle cx="9" cy="9" r="7" strokeWidth="2.6" strokeDasharray="2.2 3.3" />
              </svg>
            </VmActions>
          </VmTitle>
          <Desktop>
            <Wallpaper width="1269" height="668" viewBox="3 32 1269 668">
              <defs>
                <linearGradient id="pane" x1="0" x2="1">
                  <stop offset="0" stopColor="#0b86ee" />
                  <stop offset="1" stopColor="#1093fb" />
                </linearGradient>
                <linearGradient id="beam" x1="0" x2="1">
                  <stop offset="0" stopColor="#0d8cf2" stopOpacity=".6" />
                  <stop offset="1" stopColor="#0a5fdc" stopOpacity=".2" />
                </linearGradient>
              </defs>
              <path d="M558 128l110 35v40H558z" fill="#0c8cf0" opacity=".25" />
              <path d="M558 128l110 35" stroke="#2a9cf4" strokeWidth="1.2" />
              <path d="M900 480l118 18-118 32z" fill="url(#beam)" />
              <path d="M900 440h118v58l-118-15z" fill="url(#pane)" />
              <path d="M900 483l118 15V440" fill="none" stroke="#1fdcf8" strokeWidth="1.7" />
            </Wallpaper>
            <ShortcutItem>
              <Icon name="zipfolder" size={14} />
              itv23
            </ShortcutItem>
            <Explorer
              x={-8}
              y={0}
              width={563}
              height={317}
              title="@it_v2.3"
              crumbs={['Ce PC', 'Desktop', 'itv23', '@it_v2.3']}
              nav={[...folderShortcuts, ...computer]}
              navTop={0.5}
              navSelected="Desktop"
              navScroll
              files={[{ icon: 'folder', name: 'atit', date: '08/10/2021 09:18', type: 'Dossier de fichiers' }]}
              fileSelected="atit"
              status={['1 élément', '1 élément sélectionné']}
            />
            <Explorer
              x={729}
              y={113}
              width={565}
              height={318}
              title="Outils"
              contextTab="Extraire"
              crumbs={['YE', 'S9 ON', 'SIG_3D_BIM', 'Outils']}
              crumbIndent={127}
              nav={[]}
              navTop={0}
              files={[
                { icon: 'file', name: 'geojson-converter.py', date: '02/10/2021 09:52', type: 'Fichier PY', size: '11 Ko' },
                { name: '', date: '01/10/2021 16:59', type: 'Dossier compressé', size: '13 933 Ko' },
              ]}
              fileSelected=""
              status={[]}
            />
            <Explorer
              x={324}
              y={125}
              width={603}
              height={439}
              title="atit"
              crumbs={['Ce PC', 'Disque local (C:)', 'Utilisateurs', 'zak', 'AppData', 'Roaming', 'Grasshopper', 'Libraries', 'atit']}
              nav={fullNav}
              navTop={9.5}
              navSelected="Disque local (C:)"
              files={atitFiles}
              fileSelected="atit"
              status={['57 élément(s)', '1 élément sélectionné\u00a0\u00a0 99,0 Ko']}
              openIcon="rhino"
              active
            />
            <Cursor width="7" height="11" viewBox="0 0 7 11">
              <path d="M.5.5v8.5l2-1.8 1.3 3 1.3-.6-1.3-2.9h2.7z" fill="#fff" stroke="#777" strokeWidth=".5" />
            </Cursor>
            <ContextMenu />
          </Desktop>
          <TaskBar>
            <StartButton>
              <svg width="5" height="9" viewBox="0 0 5 9" fill="#111"><path d="M0 .8L5 0v4.2H0zM0 4.8h5V9l-5-.8z" /></svg>
            </StartButton>
            <TaskSearch>
              <Icon name="search" size={9} />
              Taper ici pour rechercher
            </TaskSearch>
            <TaskButton>
              <svg width="9" height="9" viewBox="0 0 9 9"><circle cx="4.5" cy="4.5" r="3.6" fill="none" stroke="#222" strokeWidth="1.2" /></svg>
            </TaskButton>
            <TaskButton>
              <svg width="10" height="8" viewBox="0 0 10 8" fill="none" stroke="#555" strokeWidth=".8">
                <path d="M.5 0v1h6V0M.5 2.5h6v3h-6zM.5 8V7h6v1M8.8 0v8M8.8 2v1.5" />
              </svg>
            </TaskButton>
            <TaskButton>
              <svg width="12" height="12" viewBox="0 0 24 24">
                <circle cx="12" cy="12" r="11.5" fill="#1670c4" />
                <path d="M1 10C3 3 8 .5 12 .5c7 0 11.5 5 11.5 10 0 4-3 5.5-6 5.500-2 0-3-1-2.500-2C17 9 12 6 8 7c-3 .6-5.500 2-7 3z" fill="#38c5a4" />
                <path d="M9 12c-1 5 4 9 11 7-2 3-5 4.500-8 4.500C6 23.500 5 14 9 12z" fill="#1b4fa0" />
                <path d="M15 14c0 3 4 4 8 2-1 3-5 4-8 3-3-1.500-3-4-2-6z" fill="#c6ecee" />
              </svg>
            </TaskButton>
            <TaskButton $on>
              <svg width="11" height="10" viewBox="0 0 22 20">
                <path d="M0 1h8l2 2h11v5H0z" fill="#e5a92c" />
                <path d="M0 6h22v12H0z" fill="#fbd265" />
                <path d="M4 11h14v8h-4v-4H8v4H4z" fill="#2b83c0" />
              </svg>
            </TaskButton>
            <TaskButton>
              <svg width="12" height="11" viewBox="0 0 24 22">
                <path d="M0 7l12-7 12 7v14H0z" fill="#1173bb" />
                <path d="M3 6h18v8H3z" fill="#eef7fc" />
                <path d="M0 7l12 7 12-7v15H0z" fill="#22a7e0" />
                <path d="M24 7v15H0z" fill="#1484c8" opacity=".5" />
              </svg>
            </TaskButton>
            <Tray>
              <Sun />
              <Weather>11°C&nbsp; Ensoleillé</Weather>
              <TrayGlyphs>
                <Chevron dir="up" size={7} />
                <svg width="7" height="8" viewBox="0 0 7 8" fill="none" stroke="#454b55" strokeWidth=".7">
                  <path d="M1.5.5h4M1.5 7.5h4M.5 2h4.5v4H.5zM5 3l1.5-.6v3.2L5 5" />
                </svg>
                <svg width="9" height="8" viewBox="0 0 9 8" fill="none" stroke="#454b55" strokeWidth=".8">
                  <path d="M2.5 1.5h6v4h-6zM5.5 5.5v2M3.5 7.5h4M.5.5h2v3h-2z" />
                </svg>
                <svg width="8" height="8" viewBox="0 0 8 8" fill="none" stroke="#454b55" strokeWidth=".7">
                  <path d="M.5 3h1.3l2-2v6l-2-2H.5zM5 2.5c.8 1 .8 2 0 3M6.5 1.500c1.300 1.500 1.300 3.500 0 5" />
                </svg>
              </TrayGlyphs>
              <Lang>FRA</Lang>
              <Clock>
                09:18
                <br />
                08/10/2021
              </Clock>
              <svg width="22" height="9" viewBox="0 0 22 9" fill="none" stroke="#454b55" strokeWidth=".8">
                <path d="M.5.5h8v6H6L4.5 8 3 6.5H.5z" />
                <path d="M19.5 0v9" stroke="#aab" />
              </svg>
            </Tray>
          </TaskBar>
        </VmWindow>
        <ShareBanner>
          <Sharing>
            <svg width="5" height="6" viewBox="0 0 5 6"><path d="M1 0L0 1c0 3 2 4.5 4 5l1-1-1.500-1-.8.5L1.500 2.500 2 1.800z" fill="#0c3d14" /></svg>
            Vous êtes en train de partager votre écran
            <svg width="6" height="6" viewBox="0 0 12 12">
              <path d="M6 0l5.500 2v4c0 3-2.500 5-5.500 6C3 11 .5 9 .5 6V2z" fill="#0f4a1a" />
              <path d="M3 6l2.200 2L9 4" fill="none" stroke="#23ea52" strokeWidth="1.5" />
            </svg>
          </Sharing>
          <StopSharing>
            <i />
            Arrêter de partager
          </StopSharing>
        </ShareBanner>
        <Toast>La parole est à : Adrien Revel</Toast>
      </Screen>
    </>
  );
}

export default App;
